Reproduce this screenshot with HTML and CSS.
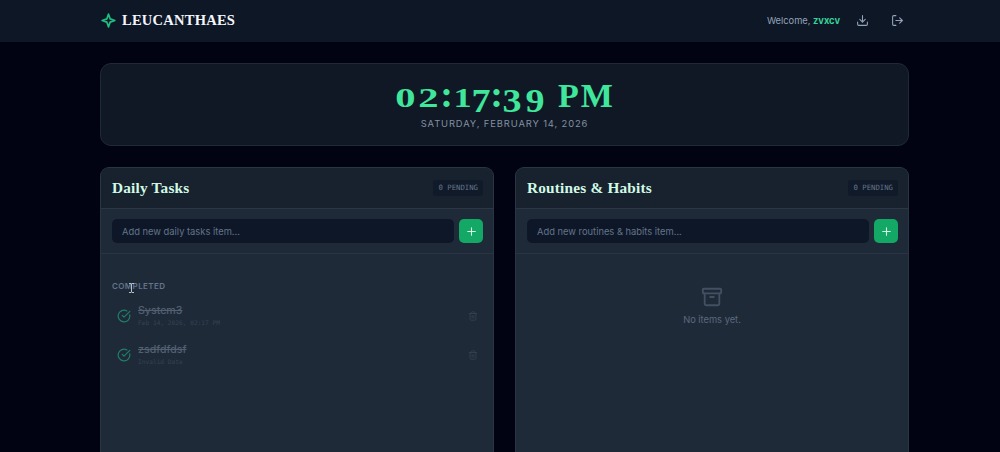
FILE: index.html
```html
<!DOCTYPE html>
<html lang="en">
<head>
    <meta charset="UTF-8">
    <meta name="viewport" content="width=device-width, initial-scale=1.0">
    <title>Leucanthaes</title>
    <link rel="stylesheet" href="styles.css">
</head>
<body>
    <header class="topbar">
        <div class="brand">
            <svg class="icon brand-icon" viewBox="0 0 24 24"><path d="M12 3 L14.300 9.700 L21 12 L14.300 14.300 L12 21 L9.700 14.300 L3 12 L9.700 9.700Z"/></svg>
            <span class="brand-name">LEUCANTHAES</span>
        </div>
        <div class="user">
            <span class="welcome">Welcome, <b>zvxcv</b></span>
            <svg class="icon" viewBox="0 0 24 24"><path d="M21 15v4a2 2 0 0 1-2 2H5a2 2 0 0 1-2-2v-4M7 10l5 5 5-5M12 15V3"/></svg>
            <svg class="icon logout" viewBox="0 0 24 24"><path d="M9 21H5a2 2 0 0 1-2-2V5a2 2 0 0 1 2-2h4M16 17l5-5-5-5M21 12H9"/></svg>
        </div>
    </header>

    <main>
        <section class="clock">
            <div class="time">
                <span class="num zero">0</span>
                <span class="num two">2</span>
                <span class="colon">:</span>
                <span class="num one">1</span>
                <span class="low">7</span>
                <span class="colon">:</span>
                <span class="low">3</span>
                <span class="low nine">9</span>
                <span class="ampm">PM</span>
            </div>
            <div class="date">SATURDAY, FEBRUARY 14, 2026</div>
        </section>

        <div class="columns">
            <section class="panel">
                <div class="panel-head">
                    <h2>Daily Tasks</h2>
                    <span class="count">0 PENDING</span>
                </div>
                <div class="add-row">
                    <input type="text" placeholder="Add new daily tasks item...">
                    <button type="button"><svg class="icon" viewBox="0 0 24 24"><path d="M5 12h14M12 5v14"/></svg></button>
                </div>
                <div class="completed">
                    <h3>COMPLETED</h3>
                    <div class="task">
                        <svg class="icon check" viewBox="0 0 24 24"><path d="M21.8 10A10 10 0 1 1 17 3.34M9 11l3 3L22 4"/></svg>
                        <div class="task-text">
                            <div class="task-name">System3</div>
                            <div class="task-date">Feb 14, 2026, 02:17 PM</div>
                        </div>
                        <svg class="icon trash" viewBox="0 0 24 24"><path d="M3 6h18M19 6v14a2 2 0 0 1-2 2H7a2 2 0 0 1-2-2V6M8 6V4a2 2 0 0 1 2-2h4a2 2 0 0 1 2 2v2M10 11v6M14 11v6"/></svg>
                    </div>
                    <div class="task">
                        <svg class="icon check" viewBox="0 0 24 24"><path d="M21.8 10A10 10 0 1 1 17 3.34M9 11l3 3L22 4"/></svg>
                        <div class="task-text">
                            <div class="task-name">zsdfdfdsf</div>
                            <div class="task-date">Invalid Date</div>
                        </div>
                        <svg class="icon trash" viewBox="0 0 24 24"><path d="M3 6h18M19 6v14a2 2 0 0 1-2 2H7a2 2 0 0 1-2-2V6M8 6V4a2 2 0 0 1 2-2h4a2 2 0 0 1 2 2v2M10 11v6M14 11v6"/></svg>
                    </div>
                </div>
            </section>

            <section class="panel">
                <div class="panel-head">
                    <h2>Routines &amp; Habits</h2>
                    <span class="count">0 PENDING</span>
                </div>
                <div class="add-row">
                    <input type="text" placeholder="Add new routines &amp; habits item...">
                    <button type="button"><svg class="icon" viewBox="0 0 24 24"><path d="M5 12h14M12 5v14"/></svg></button>
                </div>
                <div class="empty">
                    <svg class="icon" viewBox="0 0 24 24"><rect x="2" y="3" width="20" height="5" rx="1"/><path d="M4 8v11a2 2 0 0 0 2 2h12a2 2 0 0 0 2-2V8M10 12h4"/></svg>
                    <span>No items yet.</span>
                </div>
            </section>
        </div>
    </main>

    <!-- text caret pointer -->
    <svg class="pointer" viewBox="0 0 7 10"><path d="M1 .5h2l.5.5.5-.5h2M3.500 1v8M1 9.500h2l.5-.5.5.5h2"/></svg>
</body>
</html>
```
FILE: styles.css
```css
* {
    box-sizing: border-box;
}

body {
    display: flex;
    flex-direction: column;
    margin: 0;
    height: 100vh;
    background-color: #010312;
    font-family: Inter, sans-serif;
    color: #94a3b8;
}

h2, h3 {
    margin: 0;
}

.icon {
    width: 13px;
    height: 13px;
    fill: none;
    stroke: currentColor;
    stroke-width: 2;
    stroke-linecap: round;
    stroke-linejoin: round;
    flex-shrink: 0;
}

.topbar {
    display: flex;
    align-items: center;
    justify-content: space-between;
    height: 42px;
    padding: 0 90px 2px 100px;
    background-color: #0e1726;
}

.brand {
    display: flex;
    align-items: center;
    gap: 5px;
}

.brand-icon {
    width: 17px;
    height: 17px;
    stroke-width: 2.3;
    color: #1fbf80;
}

.brand-name {
    font: bold 14.5px Georgia, "Liberation Serif", serif;
    letter-spacing: 0.25px;
    color: #f3f6fa;
}

.user {
    display: flex;
    align-items: center;
}

.welcome {
    margin-right: 16px;
    font-size: 9.3px;
}

.welcome b {
    color: #34d399;
}

.logout {
    margin: 0 6px 0 22px;
}

main {
    display: flex;
    flex: 1;
    flex-direction: column;
    width: 809px;
    margin: 21px 0 0 100px;
}

.clock {
    height: 83px;
    padding-top: 12px;
    border: 1px solid #202a37;
    border-radius: 11px;
    background-color: #0f1824;
    text-align: center;
}

.time {
    display: flex;
    align-items: baseline;
    justify-content: center;
    height: 41px;
    font: bold 34px/36px Georgia, "Liberation Serif", serif;
    color: #40e69b;
}

/* old-style figures: 0, 1, 2 at x-height, the others hang below the line */
.num {
    width: 23px;
    font-size: 28px;
    transform: scaleX(1.45);
}

.one {
    width: 19px;
    transform: scaleX(1.3);
}

.low {
    width: 18px;
    transform: translateY(5px) scaleX(1.12);
}

.nine {
    width: 28px;
}

.colon {
    width: 13px;
    font-size: 38px;
}

.ampm {
    margin-left: 9px;
    letter-spacing: 2px;
}

.date {
    font-size: 9.4px;
    line-height: 14px;
    letter-spacing: 0.88px;
    color: #8490a2;
}

.columns {
    display: grid;
    flex: 1;
    grid-template-columns: 1fr 1fr;
    gap: 21px;
    margin-top: 21px;
}

.panel {
    border: 1px solid #2a3543;
    border-bottom: 0;
    border-radius: 9px 9px 0 0;
    background-color: #1f2a39;
    overflow: hidden;
}

.panel-head {
    display: flex;
    align-items: center;
    justify-content: space-between;
    height: 41px;
    padding: 0 10px 0 11px;
    border-bottom: 1px solid #2c3746;
    background-color: #18212e;
}

.panel-head h2 {
    font: bold 15.3px Georgia, "Liberation Serif", serif;
    letter-spacing: 0.2px;
    color: #d1fae5;
}

.count {
    padding: 0 5px;
    border-radius: 3px;
    background-color: #101a29;
    font: 7.3px/16px "DejaVu Sans Mono", monospace;
    color: #64748b;
}

.add-row {
    display: flex;
    gap: 5px;
    height: 45px;
    padding: 10px 10px 10px 11px;
    border-bottom: 1px solid #293544;
}

.add-row input {
    flex: 1;
    padding: 0 10px;
    border: 0;
    border-radius: 5px;
    background-color: #0e1727;
    font: 9.35px Inter, sans-serif;
}

.add-row input::placeholder {
    color: #64748b;
}

.add-row button {
    display: flex;
    align-items: center;
    justify-content: center;
    width: 24px;
    padding: 0;
    border: 0;
    border-radius: 5px;
    background-color: #13a865;
    color: #d5f5e5;
}

.completed {
    padding: 27px 10px 0 11px;
}

.completed h3 {
    margin-bottom: 5px;
    font-size: 8px;
    line-height: 10px;
    font-weight: 600;
    letter-spacing: 0.4px;
    color: #64748b;
}

.task {
    display: flex;
    align-items: center;
    height: 39px;
    padding: 0 5px;
}

.check {
    width: 14px;
    height: 14px;
    color: #217f69;
}

.task-text {
    flex: 1;
    margin-left: 7px;
}

.task-name {
    font-size: 10.6px;
    line-height: 15px;
    font-weight: 500;
    text-decoration: line-through;
    color: #526071;
}

.task-date {
    font: 6.2px/10px "DejaVu Sans Mono", monospace;
    color: #354252;
}

.trash {
    width: 10px;
    height: 10px;
    color: #354252;
}

.empty {
    display: flex;
    flex-direction: column;
    align-items: center;
    gap: 5px;
    padding-top: 32px;
    font-size: 9.3px;
    line-height: 14px;
    color: #5b697d;
}

.empty .icon {
    width: 22px;
    height: 22px;
    color: #435062;
}

.pointer {
    position: absolute;
    left: 128px;
    top: 283px;
    width: 7px;
    height: 10px;
    fill: none;
    stroke: #b8c0ca;
}
```
